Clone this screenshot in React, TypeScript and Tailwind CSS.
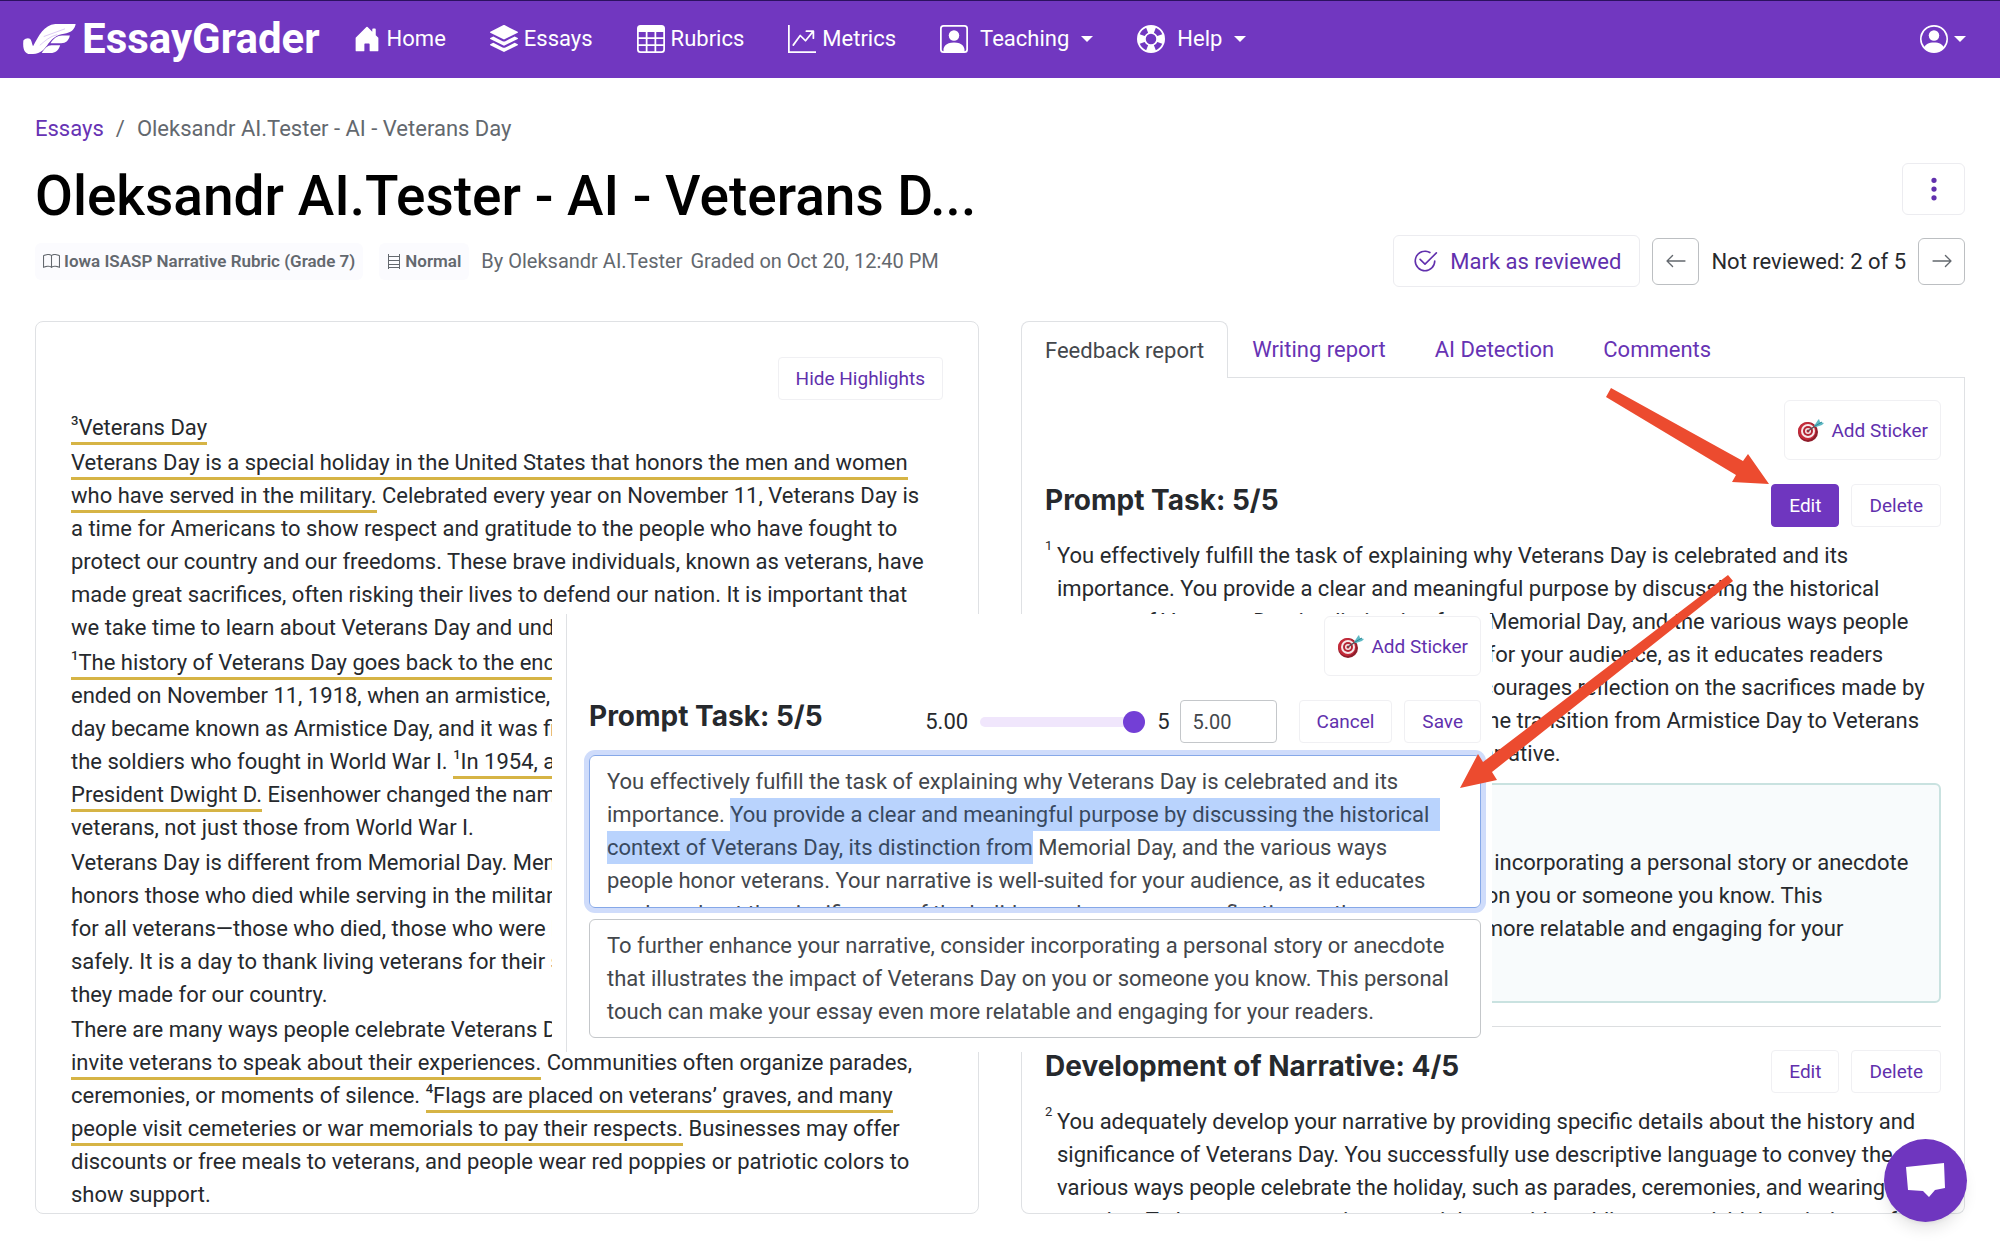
import {FunctionComponent, ReactNode, useEffect, useRef} from 'react'
import {
    BsArrowLeft,
    BsArrowRight,
    BsBook,
    BsCheck2Circle,
    BsGraphUpArrow,
    BsHouseDoorFill,
    BsLifePreserver,
    BsPersonCircle,
    BsPersonSquare,
    BsStack,
    BsTable,
    BsThreeDotsVertical,
} from 'react-icons/bs'

interface IChildren {
    children: ReactNode
}

interface IButton extends IChildren {
    primary?: boolean
}

interface INavItem extends IChildren {
    icon: ReactNode
}

interface ISection {
    title: string
    primary?: boolean
}

interface INote extends IChildren {
    number: number
}

const report = "You effectively fulfill the task of explaining why Veterans Day is celebrated and its importance. "
const selected = "You provide a clear and meaningful purpose by discussing the historical context of Veterans Day, its distinction from"
const reportEnd = " Memorial Day, and the various ways people honor veterans. Your narrative is well-suited for your audience, " +
    "as it educates readers about the significance of the holiday and encourages reflection on the sacrifices made by " +
    "veterans. You also discussed the history of the transition from Armistice Day to Veterans Day, which adds some more depth to your narrative."
const advice = "To further enhance your narrative, consider incorporating a personal story or anecdote that illustrates " +
    "the impact of Veterans Day on you or someone you know. This"
const adviceEnd = "personal touch can make your essay even more relatable and engaging for your readers."

const Logo = () => (
    <a href="#" className="flex items-center gap-[5px] text-white">
        <svg width="55" height="31" viewBox="0 0 56 32" fill="currentColor" aria-hidden="true">
            <path d="M1 18c3-3 7-3 8 0 1 2 1 4 2 6C17 13 22 2 34 1h21c-1 6-5 9-12 10-8 1-12 5-16 10-4 6-8 11-16 11H8C3 32 0 28 1 18Z"/>
            <path d="M29 21c3-5 7-8 12-8h8c-1 5-4 8-9 8Z"/>
            <path d="M20 31c3-5 6-8 10-8h9c-2 6-5 8-10 8Z"/>
            <path d="M22 14 44 6M18 23c6-5 10-9 18-11" stroke="#dcc9f5" strokeWidth="1" fill="none"/>
        </svg>
        <span className="text-[42px] leading-[50px] font-bold">EssayGrader</span>
    </a>
)

const Caret = () => (
    <svg width="12" height="6" viewBox="0 0 12 6" fill="currentColor" aria-hidden="true">
        <path d="M0 0h12L6 6Z"/>
    </svg>
)

const Target = () => (
    <svg width="28" height="24" viewBox="0 0 28 24" aria-hidden="true">
        <ellipse cx="11" cy="14" rx="10" ry="10" fill="#8f1d2b"/>
        <ellipse cx="10" cy="13" rx="9" ry="9" fill="#c42b3a"/>
        <circle cx="11" cy="13" r="7" fill="#f6e9ea"/>
        <circle cx="11" cy="13" r="5" fill="#b52636"/>
        <circle cx="11" cy="13" r="3" fill="#f6e9ea"/>
        <circle cx="11" cy="13" r="1.5" fill="#b52636"/>
        <path d="M11 13 21 6" stroke="#5a4a52" strokeWidth="1.5"/>
        <path d="m17 8 4-6 1-1 1 3 4 1-2 2-6 2Z" fill="#5fb9c4"/>
        <path d="m18 8 7-4" stroke="#2b8a97" strokeWidth="1"/>
    </svg>
)

const Shelf = () => (
    <svg width="14" height="15" viewBox="0 0 14 15" fill="none" stroke="currentColor" strokeWidth="1" aria-hidden="true">
        <path d="M1.500 0v15M12.500 0v15M1 2.500h12M1 6.500h12M1 10.500h12M1 13.500h12"/>
    </svg>
)

const NavItem: FunctionComponent<INavItem> = ({icon, children}) => (
    <a href="#" className="flex items-center">
        {icon}
        {children}
    </a>
)

const SmallButton: FunctionComponent<IButton> = ({primary, children}) => (
    <button
        className={primary
            ? "h-[43px] px-[17px] rounded border border-[#6f36bf] bg-[#6f36bf] text-white text-[19px]"
            : "h-[43px] px-[17px] rounded border border-[#f0f0f3] bg-white text-[#6130ad] text-[19px]"}>
        {children}
    </button>
)

const StickerButton = () => (
    <button className="flex items-center gap-[6px] h-[60px] px-3 rounded-md border border-[#f0f0f3] bg-white text-[#6130ad] text-[19px]">
        <Target/>
        Add Sticker
    </button>
)

const Mark: FunctionComponent<IChildren> = ({children}) => (
    <span className="border-b-[3px] border-[#d6b445] pb-[2px]">{children}</span>
)

const Ref: FunctionComponent<IChildren> = ({children}) => (
    <sup className="-top-[10px] text-[13px] font-medium">{children}</sup>
)

const SectionHeader: FunctionComponent<ISection> = ({title, primary}) => (
    <div className="flex items-start justify-between">
        <h2 className="font-[Inter] text-[28px] leading-[32px] font-bold">{title}</h2>
        <div className="flex gap-3">
            <SmallButton primary={primary}>Edit</SmallButton>
            <SmallButton>Delete</SmallButton>
        </div>
    </div>
)

const Note: FunctionComponent<INote> = ({number, children}) => (
    <div className="flex mt-3">
        <span className="w-3 shrink-0 text-[13px] leading-[13px]">{number}</span>
        <p className="pr-1">{children}</p>
    </div>
)

const Header = () => (
    <header className="flex items-center h-[78px] shrink-0 border-t border-[#2c1160] bg-[#7137c0] pl-[22px] pr-[34px] pb-[2px] text-[22px] text-white">
        <Logo/>
        <nav className="flex flex-1 items-center gap-11 ml-[33px]">
            <NavItem icon={<BsHouseDoorFill className="mr-[6px]" size={28}/>}>Home</NavItem>
            <NavItem icon={<BsStack className="mr-[6px]" size={28}/>}>Essays</NavItem>
            <NavItem icon={<BsTable className="mr-[6px]" size={28}/>}>Rubrics</NavItem>
            <NavItem icon={<BsGraphUpArrow className="mr-[6px]" size={28}/>}>Metrics</NavItem>
            <NavItem icon={<BsPersonSquare className="mr-3" size={28}/>}>
                <span className="mr-3">Teaching</span><Caret/>
            </NavItem>
            <NavItem icon={<BsLifePreserver className="mr-3" size={28}/>}>
                <span className="mr-3">Help</span><Caret/>
            </NavItem>
        </nav>
        <button aria-label="Account" className="flex items-center gap-[6px]">
            <BsPersonCircle size={28}/><Caret/>
        </button>
    </header>
)

const TitleBar = () => (
    <>
        <nav className="flex gap-3 mt-[34px] text-[#63686e]">
            <a href="#" className="text-[#6733b4]">Essays</a>
            <span>/</span>
            <span>Oleksandr AI.Tester - AI - Veterans Day</span>
        </nav>
        <div className="flex items-start justify-between mt-[18px]">
            <h1 className="text-[55px] leading-[66px] font-medium text-black">
                Oleksandr AI.Tester - AI - Veterans D...
            </h1>
            <button aria-label="More" className="flex items-center justify-center w-[63px] h-[52px] rounded-md border border-[#ececf0] text-[#6130ad]">
                <BsThreeDotsVertical size={28}/>
            </button>
        </div>
        <div className="flex items-center justify-between mt-[6px]">
            <div className="flex items-center text-[20px] text-[#63686e]">
                <span className="flex items-center gap-1 rounded-md bg-[#fbfbfe] px-2 py-[2px] text-[17px] font-semibold">
                    <BsBook size={17}/>Iowa ISASP Narrative Rubric (Grade 7)
                </span>
                <span className="flex items-center gap-1 ml-4 rounded-md bg-[#fbfbfe] px-2 py-[2px] text-[17px] font-semibold">
                    <Shelf/>Normal
                </span>
                <span className="ml-3">By Oleksandr AI.Tester</span>
                <span className="ml-2">Graded on Oct 20, 12:40 PM</span>
            </div>
            <div className="flex items-center gap-3">
                <button className="flex items-center gap-3 h-[52px] px-[18px] rounded-md border border-[#ececf0] text-[#6130ad]">
                    <BsCheck2Circle size={26}/>Mark as reviewed
                </button>
                <button aria-label="Previous" className="flex items-center justify-center w-[47px] h-[47px] rounded-md border border-[#bcbfc2] text-[#63686e]">
                    <BsArrowLeft size={22}/>
                </button>
                <span>Not reviewed: 2 of 5</span>
                <button aria-label="Next" className="flex items-center justify-center w-[47px] h-[47px] rounded-md border border-[#bcbfc2] text-[#63686e]">
                    <BsArrowRight size={22}/>
                </button>
            </div>
        </div>
    </>
)

const Essay = () => (
    <section className="rounded-lg border border-[#dfe1e4] px-[35px] pt-[35px] overflow-hidden">
        <div className="flex justify-end mb-[11px]">
            <SmallButton>Hide Highlights</SmallButton>
        </div>
        <div className="flex flex-col gap-[2px] pr-[11px]">
            <p><Mark><Ref>3</Ref>Veterans Day</Mark></p>
            <p>
                <Mark>Veterans Day is a special holiday in the United States that honors the men and women who have served in
                    the military.</Mark> Celebrated every year on November 11, Veterans Day is a time for Americans to show
                respect and gratitude to the people who have fought to protect our country and our freedoms. These brave
                individuals, known as veterans, have made great sacrifices, often risking their lives to defend our nation.
                It is important that we take time to learn about Veterans Day and understand why we celebrate it.
            </p>
            <p>
                <Mark><Ref>1</Ref>The history of Veterans Day goes back to the end of World War I.</Mark> The war<br/>
                ended on November 11, 1918, when an armistice, or truce, was signed. That<br/>
                day became known as Armistice Day, and it was first celebrated to honor<br/>
                the soldiers who fought in World War I. <Mark><Ref>1</Ref>In 1954, after another world war,<br/>
                President Dwight D.</Mark> Eisenhower changed the name to honor all of our<br/>
                veterans, not just those from World War I.
            </p>
            <p>
                Veterans Day is different from Memorial Day. Memorial Day, in May,<br/>
                honors those who died while serving in the military. Veterans Day is<br/>
                for all veterans—those who died, those who were hurt, and those home<br/>
                safely. It is a day to thank living veterans for their service and sacrifices<br/>
                they made for our country.
            </p>
            <p>
                There are many ways people celebrate Veterans Day. <Mark>Many schools<br/>
                invite veterans to speak about their experiences.</Mark> Communities often organize parades, ceremonies, or
                moments of silence. <Mark><Ref>4</Ref>Flags are placed on veterans’ graves, and many people visit cemeteries
                or war memorials to pay their respects.</Mark> Businesses may offer discounts or free meals to veterans, and
                people wear red poppies or patriotic colors to show support.
            </p>
        </div>
    </section>
)

const Feedback = () => (
    <section className="flex flex-col min-h-0">
        <div className="flex">
            <button className="h-[57px] px-[23px] rounded-t-lg border border-b-0 border-[#dfe1e4] text-[#43474c]">Feedback report</button>
            <div className="flex flex-1 gap-[49px] pl-[24px] border-b border-[#dfe1e4] text-[#6733b4]">
                <button>Writing report</button>
                <button>AI Detection</button>
                <button>Comments</button>
            </div>
        </div>
        <div className="flex-1 min-h-0 overflow-hidden rounded-b-lg border border-t-0 border-[#dfe1e4] px-[23px] pt-[22px]">
            <div className="flex justify-end mb-6">
                <StickerButton/>
            </div>
            <SectionHeader title="Prompt Task: 5/5" primary/>
            <Note number={1}>{report + selected + reportEnd}</Note>
            <div className="mt-[13px] rounded-md border-2 border-[#c9e2e0] bg-[#f8fbfc] px-6 pt-7 pb-[23px]">
                <h3 className="font-bold">Areas for improvement</h3>
                <p>{advice}<br/>{adviceEnd}</p>
            </div>
            <hr className="my-[23px] border-[#dcdee0]"/>
            <SectionHeader title="Development of Narrative: 4/5"/>
            <Note number={2}>
                You adequately develop your narrative by providing specific details about the history and significance of
                Veterans Day. You successfully use descriptive language to convey the various ways people celebrate the
                holiday, such as parades, ceremonies, and wearing poppies. To boost your narrative, you might consider
                adding more vivid descriptions of these events.
            </Note>
        </div>
    </section>
)

const Editor = () => {
    const feedbackRef = useRef<HTMLTextAreaElement>(null)

    useEffect(() => {
        feedbackRef.current?.focus({preventScroll: true})
        feedbackRef.current?.setSelectionRange(report.length, report.length + selected.length)
    }, [])

    return (
        <div className="absolute left-[552px] top-[614px] w-[940px] bg-white pl-[14px]">
            <div className="border-l border-[#dfe1e4] pl-[22px] pr-[11px] pt-[2px] pb-[14px]">
                <div className="flex justify-end">
                    <StickerButton/>
                </div>
                <div className="flex items-center mt-6">
                    <h2 className="flex-1 self-start font-[Inter] text-[28px] leading-[32px] font-bold">Prompt Task: 5/5</h2>
                    <label htmlFor="score">5.00</label>
                    <input
                        id="score"
                        type="range"
                        min={0}
                        max={5}
                        step={0.5}
                        defaultValue={5}
                        className="w-[165px] h-[10px] mx-3 appearance-none rounded-full bg-[#f0e6fc] [&::-webkit-slider-thumb]:appearance-none [&::-webkit-slider-thumb]:size-[22px] [&::-webkit-slider-thumb]:rounded-full [&::-webkit-slider-thumb]:bg-[#733fd6]"
                    />
                    <span>5</span>
                    <input
                        type="text"
                        aria-label="Score"
                        defaultValue="5.00"
                        className="w-[97px] h-[43px] ml-[10px] mr-[22px] px-3 rounded border border-[#c4c7ca] text-[20px] text-[#43474c]"
                    />
                    <div className="flex gap-3">
                        <SmallButton>Cancel</SmallButton>
                        <SmallButton>Save</SmallButton>
                    </div>
                </div>
                <textarea
                    ref={feedbackRef}
                    aria-label="Feedback"
                    defaultValue={report + selected + reportEnd}
                    className="block w-full h-[153px] mt-3 pl-[17px] pr-[30px] py-[9px] resize-none overflow-hidden rounded-md border border-[#86a8e8] text-[#43474c] outline-none ring-[5px] ring-[#cfdcfb] selection:bg-[#b9d3fd] selection:text-[#38495f]"
                />
                <textarea
                    aria-label="Advice"
                    defaultValue={advice + " " + adviceEnd}
                    className="block w-full h-[119px] mt-[11px] px-[17px] py-[9px] resize-none overflow-hidden rounded-md border border-[#c4c7ca] text-[#43474c]"
                />
            </div>
        </div>
    )
}

const Arrows = () => (
    <svg className="absolute left-[1440px] top-[380px] pointer-events-none" width="340" height="420" viewBox="1440 380 340 420" fill="#ec4b2f" aria-hidden="true">
        <path d="M1611 388 1743 461 1748 454 1769 484 1732 482 1736 475 1606 397Z"/>
        <path d="M1728 575 1483 762 1478 754 1460 788 1497 780 1492 772 1733 581Z"/>
    </svg>
)

const ChatButton = () => (
    <button aria-label="Chat" className="fixed right-[33px] bottom-[28px] flex items-center justify-center size-[83px] rounded-full bg-[#6f36bf] shadow-lg">
        <svg width="40" height="36" viewBox="0 0 40 36" fill="white" aria-hidden="true">
            <path d="M0 4 38 0 39 25 29 27 23 34 17 28 2 27Z"/>
        </svg>
    </button>
)

const App = () => (
    <div className="relative flex flex-col h-screen overflow-hidden bg-white font-[Roboto,sans-serif] text-[22px] leading-[33px] text-[#26292d]">
        <Header/>
        <main className="flex flex-col flex-1 min-h-0 px-[35px] pb-[36px]">
            <TitleBar/>
            <div className="grid grid-cols-2 grid-rows-[minmax(0,1fr)] gap-[42px] flex-1 min-h-0 mt-[34px]">
                <Essay/>
                <Feedback/>
            </div>
        </main>
        <Editor/>
        <Arrows/>
        <ChatButton/>
    </div>
)

export default App
